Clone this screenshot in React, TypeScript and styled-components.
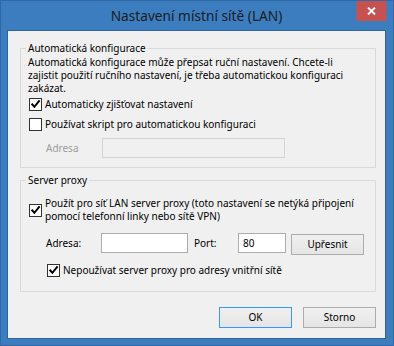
import React from 'react';
import styled, { createGlobalStyle } from 'styled-components';

const GlobalStyle = createGlobalStyle`
  html, body {
    margin: 0;
    padding: 0;
    background: #3c7dbf;
  }
  * {
    box-sizing: border-box;
  }
`;

const FONT = `"Noto Sans", "Open Sans", sans-serif`;

const Window = styled.div`
  width: 394px;
  height: 346px;
  border: 1px solid #3068a6;
  background: #3c7dbf;
  display: flex;
  flex-direction: column;
  padding: 0 7px 6px 6px;
  font-family: ${FONT};
  font-size: 10px;
  color: #000;
`;

const TitleBar = styled.div`
  height: 29px;
  flex-shrink: 0;
  display: grid;
  grid-template-columns: 1fr auto 1fr;
  align-items: center;
`;

const Title = styled.div`
  grid-column: 2;
  font-size: 13.7px;
  line-height: 18px;
  color: #1c1c1c;
  padding-top: 1px;
  white-space: nowrap;
`;

const CloseButton = styled.div`
  grid-column: 3;
  justify-self: end;
  align-self: start;
  width: 30px;
  height: 20px;
  background: #c75050;
  display: flex;
  align-items: center;
  justify-content: center;
`;

const Panel = styled.div`
  flex: 1;
  background: #f0f0f0;
  border: 1px solid #2f639b;
  padding: 11px 9px 0 12px;
  display: flex;
  flex-direction: column;
`;

const Group = styled.fieldset<{ $gap?: number }>`
  margin: ${(p) => p.$gap ?? 0}px 0 0 0;
  padding: 0 8px ${(p) => (p.$gap ? 12 : 9)}px 7px;
  border: 1px solid #d9d9d9;
  min-width: 0;
  display: flex;
  flex-direction: column;
`;

const Legend = styled.legend`
  padding: 0 2px;
  margin-left: -2px;
  line-height: 13px;
  white-space: nowrap;
`;

const Description = styled.div`
  padding-top: 1px;
  line-height: 13px;
  white-space: nowrap;
`;

const CheckRow = styled.label<{ $top: number; $indent?: number }>`
  display: flex;
  align-items: center;
  gap: 3px;
  min-height: 17px;
  margin-top: ${(p) => p.$top}px;
  margin-left: ${(p) => 1 + (p.$indent ?? 0)}px;
  white-space: nowrap;
`;

const CheckLabel = styled.span`
  line-height: 13px;
`;

const Box = styled.span`
  width: 13px;
  height: 13px;
  flex-shrink: 0;
  border: 1px solid #333;
  background: #fff;
  display: flex;
  align-items: center;
  justify-content: center;
`;

const FieldRow = styled.div<{ $top: number }>`
  display: flex;
  align-items: flex-start;
  margin-top: ${(p) => p.$top}px;
  padding-left: 18px;
`;

const FieldLabel = styled.span<{ $width: number; $disabled?: boolean }>`
  width: ${(p) => p.$width}px;
  height: 20px;
  line-height: 20px;
  flex-shrink: 0;
  color: ${(p) => (p.$disabled ? '#9c9c9c' : '#000')};
`;

const TextBox = styled.div<{ $width: number; $disabled?: boolean }>`
  width: ${(p) => p.$width}px;
  height: 20px;
  flex-shrink: 0;
  border: 1px solid ${(p) => (p.$disabled ? '#d4d4d4' : '#abadb3')};
  background: ${(p) => (p.$disabled ? '#f0f0f0' : '#fff')};
  padding-left: 4px;
  line-height: 18px;
`;

const Button = styled.div<{ $default?: boolean; $drop?: number }>`
  width: 73px;
  height: 21px;
  flex-shrink: 0;
  margin-top: ${(p) => p.$drop ?? 0}px;
  border: 1px solid ${(p) => (p.$default ? '#3399ff' : '#acacac')};
  background: linear-gradient(#f0f0f0, #e5e5e5);
  display: flex;
  align-items: center;
  justify-content: center;
  line-height: 13px;
`;

const Spacer = styled.div<{ $width: number }>`
  width: ${(p) => p.$width}px;
  flex-shrink: 0;
`;

const ButtonBar = styled.div`
  display: flex;
  justify-content: flex-end;
  gap: 11px;
  margin-top: 15px;
`;

function Check({ checked }: { checked: boolean }) {
  return (
    <Box>
      {checked && (
        <svg width="11" height="11" viewBox="0 0 11 11">
          <path
            d="M1.6 4.8 L4.4 7.8 L9.6 1.4"
            fill="none"
            stroke="#000"
            strokeWidth="2"
          />
        </svg>
      )}
    </Box>
  );
}

export default function App() {
  return (
    <>
      <GlobalStyle />
      <Window>
        <TitleBar>
          <Title>Nastavení místní sítě (LAN)</Title>
          <CloseButton>
            <svg width="9" height="8" viewBox="0 0 9 8">
              <path d="M1 0.5 L8 7.5 M8 0.5 L1 7.5" stroke="#fff" strokeWidth="1.9" />
            </svg>
          </CloseButton>
        </TitleBar>

        <Panel>
          <Group>
            <Legend>Automatická konfigurace</Legend>
            <Description>
              Automatická konfigurace může přepsat ruční nastavení. Chcete-li
              <br />
              zajistit použití ručního nastavení, je třeba automatickou konfiguraci
              <br />
              zakázat.
            </Description>
            <CheckRow $top={1}>
              <Check checked />
              <CheckLabel>Automaticky zjišťovat nastavení</CheckLabel>
            </CheckRow>
            <CheckRow $top={3}>
              <Check checked={false} />
              <CheckLabel>Používat skript pro automatickou konfiguraci</CheckLabel>
            </CheckRow>
            <FieldRow $top={5}>
              <FieldLabel $width={56} $disabled>
                Adresa
              </FieldLabel>
              <TextBox $width={183} $disabled />
            </FieldRow>
          </Group>

          <Group $gap={6}>
            <Legend>Server proxy</Legend>
            <CheckRow $top={10}>
              <Check checked />
              <CheckLabel>
                Použít pro síť LAN server proxy (toto nastavení se netýká připojení
                <br />
                pomocí telefonní linky nebo sítě VPN)
              </CheckLabel>
            </CheckRow>
            <FieldRow $top={10}>
              <FieldLabel $width={55}>Adresa:</FieldLabel>
              <TextBox $width={87} />
              <Spacer $width={6} />
              <FieldLabel $width={44}>Port:</FieldLabel>
              <TextBox $width={48}>80</TextBox>
              <Spacer $width={5} />
              <Button $drop={1}>Upřesnit</Button>
            </FieldRow>
            <CheckRow $top={7} $indent={18}>
              <Check checked />
              <CheckLabel>Nepoužívat server proxy pro adresy vnitřní sítě</CheckLabel>
            </CheckRow>
          </Group>

          <ButtonBar>
            <Button $default>OK</Button>
            <Button>Storno</Button>
          </ButtonBar>
        </Panel>
      </Window>
    </>
  );
}
